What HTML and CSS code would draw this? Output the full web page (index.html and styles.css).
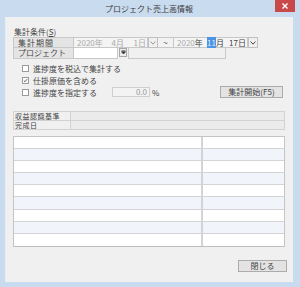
FILE: index.html
```html
<!DOCTYPE html>
<html lang="ja">
<head>
<meta charset="utf-8">
<link rel="stylesheet" href="styles.css">
</head>
<body>
<div class="window">
  <div class="titlebar">
    <span></span>
    <span class="title">プロジェクト売上高情報</span>
    <span class="close"><svg width="8" height="8" viewBox="0 0 8 8"><path d="M1.5 1.5 L6.5 6.5 M6.5 1.5 L1.5 6.5" stroke="#fff" stroke-width="1.4"/></svg></span>
  </div>
  <div class="client">
    <div class="group-title">集計条件(<u>S</u>)</div>
    <div class="row">
      <div class="lbl lbl-wide">集計期間</div>
      <div class="date disabled"><span class="y">2020年</span><span class="m">4月</span><span class="d">1日</span></div>
      <div class="ddbtn"><svg width="6" height="4" viewBox="0 0 6 4"><path d="M0.5 0.5 L3 3.2 L5.5 0.5" fill="none" stroke="#999" stroke-width="1"/></svg></div>
      <div class="tilde">~</div>
      <div class="date"><span class="y"><span class="gr">2020</span>年</span><span class="m"><span class="sel">11</span>月</span><span class="d">17日</span></div>
      <div class="ddbtn"><svg width="6" height="4" viewBox="0 0 6 4"><path d="M0.5 0.5 L3 3.2 L5.5 0.5" fill="none" stroke="#444" stroke-width="1"/></svg></div>
    </div>
    <div class="row">
      <div class="lbl">プロジェクト</div>
      <div class="proj-code"></div>
      <div class="pbtn"><svg width="5" height="5" viewBox="0 0 5 5"><path d="M0.5 0.8 H4.5 M0.5 1.8 L2.5 4 L4.5 1.8 Z" fill="#333" stroke="#333" stroke-width="0.7"/></svg></div>
      <div class="proj-name"></div>
    </div>
    <div class="checks">
      <label class="chk"><span class="box"></span>進捗度を税込で集計する</label>
      <label class="chk"><span class="box"><svg width="7" height="7" viewBox="0 0 7 7"><path d="M1.2 3.6 L2.8 5.2 L5.8 1.6" fill="none" stroke="#333" stroke-width="1.1"/></svg></span>仕掛原価を含める</label>
      <div class="chk-row">
        <label class="chk"><span class="box"></span>進捗度を指定する</label>
        <div class="num">0.0</div>
        <span class="pct">%</span>
        <div class="spacer"></div>
        <div class="btn btn-run">集計開始(F5)</div>
      </div>
    </div>
    <div class="info">
      <div class="ilbl">収益認識基準</div><div class="ival"></div>
      <div class="ilbl">完成日</div><div class="ival"></div>
    </div>
    <div class="list">
      <div class="lr"><div class="c1"></div><div class="c2"></div></div>
      <div class="lr alt"><div class="c1"></div><div class="c2"></div></div>
      <div class="lr"><div class="c1"></div><div class="c2"></div></div>
      <div class="lr alt"><div class="c1"></div><div class="c2"></div></div>
      <div class="lr"><div class="c1"></div><div class="c2"></div></div>
      <div class="lr alt"><div class="c1"></div><div class="c2"></div></div>
      <div class="lr"><div class="c1"></div><div class="c2"></div></div>
      <div class="lr alt"><div class="c1"></div><div class="c2"></div></div>
      <div class="lr last"><div class="c1"></div><div class="c2"></div></div>
    </div>
    <div class="footer">
      <div class="btn btn-close">閉じる</div>
    </div>
  </div>
</div>
</body>
</html>
```
FILE: styles.css
```css
* { box-sizing: border-box; }
html, body { margin: 0; padding: 0; }
body {
  width: 300px;
  height: 287px;
  overflow: hidden;
  background: #c9dbef;
  font-family: "Noto Sans CJK JP", "Noto Sans", sans-serif;
  font-size: 8px;
  color: #444;
}
.window {
  width: 300px;
  height: 287px;
  display: flex;
  flex-direction: column;
  padding: 0 7px 5px 5px;
  background: #c9dbef;
}
.titlebar {
  height: 17px;
  display: grid;
  grid-template-columns: 1fr auto 1fr;
  align-items: start;
  margin: 0 -3px 0 -5px;
}
.title {
  font-size: 8px;
  line-height: 17px;
  color: #3a3a3a;
  padding-left: 2px;
}
.close {
  justify-self: end;
  width: 20px;
  height: 12px;
  margin-right: 1px;
  background: #c9484a;
  display: flex;
  align-items: center;
  justify-content: center;
}
.client {
  flex: 1;
  background: #f0f0f0;
  border-left: 1px solid #e6eef8;
  display: flex;
  flex-direction: column;
  padding: 0 0 0 7px;
}
.group-title {
  margin-top: 10px;
  height: 10px;
  line-height: 10px;
  padding-left: 1px;
}
.group-title u { text-decoration: underline; }
.row {
  display: flex;
  height: 11px;
}
.lbl {
  width: 61px;
  border: 1px solid #c8c8c8;
  background: #e4e4e4;
  line-height: 9px;
  padding-left: 4px;
}
.row + .row .lbl { border-top: none; }
.lbl-wide { letter-spacing: 1px; }
.date {
  width: 74px;
  border: 1px solid #c8c8c8;
  border-left: none;
  background: #f4f4f4;
  display: flex;
  line-height: 9px;
  padding-left: 3px;
  white-space: nowrap;
}
.date.disabled { color: #aaa; }
.date .y { width: 30px; }
.date .m { width: 17px; text-align: right; }
.date .d { width: 22px; text-align: right; }
.gr { color: #aaa; }
.sel { background: #4b95e6; color: #dbe9fa; }
.ddbtn {
  width: 10px;
  border: 1px solid #c0c0c0;
  background: #f0f0f0;
  display: flex;
  align-items: center;
  justify-content: center;
}
.tilde {
  width: 16px;
  border: 1px solid #c8c8c8;
  border-left: none;
  text-align: center;
  line-height: 9px;
  background: #f2f2f2;
}
.proj-code {
  width: 44px;
  border: 1px solid #c8c8c8;
  border-left: none;
  border-top: none;
  background: #fff;
}
.pbtn {
  width: 8px;
  height: 9px;
  margin: 0 1px;
  border: 1px solid #a8a8a8;
  background: #ececec;
  display: flex;
  align-items: center;
  justify-content: center;
}
.proj-name {
  width: 98px;
  border: 1px solid #c8c8c8;
  border-top: none;
  background: #f0f0f0;
}
.checks {
  margin-top: 4px;
  padding-left: 9px;
  display: flex;
  flex-direction: column;
}
.chk {
  display: flex;
  align-items: center;
  height: 11.5px;
  white-space: nowrap;
}
.box {
  width: 7px;
  height: 7px;
  border: 1px solid #9a9a9a;
  background: #fff;
  margin-right: 4px;
  display: flex;
  align-items: center;
  justify-content: center;
}
.box svg { display: block; }
.chk-row {
  display: flex;
  align-items: center;
  height: 12px;
}
.num {
  width: 38px;
  height: 10px;
  margin-left: 15px;
  border: 1px solid #cfcfcf;
  background: #f3f3f3;
  color: #999;
  text-align: right;
  line-height: 8px;
  padding-right: 2px;
}
.pct { margin-left: 2px; }
.spacer { flex: 1; }
.btn {
  border: 1px solid #acacac;
  background: #e3e3e3;
  text-align: center;
  line-height: 10px;
}
.btn-run {
  width: 63px;
  height: 12px;
  margin-right: 10px;
}
.info {
  margin-top: 13px;
  width: 272px;
  display: grid;
  grid-template-columns: 57px 1fr;
  grid-auto-rows: 9px;
  border-top: 1px solid #d2d2d2;
  border-left: 1px solid #d2d2d2;
}
.ilbl, .ival {
  border-right: 1px solid #d2d2d2;
  border-bottom: 1px solid #d2d2d2;
}
.ilbl {
  line-height: 8px;
  padding-left: 1px;
  font-size: 7px;
  letter-spacing: 0.5px;
}
.ival { background: #ebebeb; }
.list {
  margin-top: 6px;
  width: 272px;
  border: 1px solid #c4c4c4;
  border-bottom: 1px solid #bdbdbd;
  background: #fff;
  display: flex;
  flex-direction: column;
}
.lr {
  display: flex;
  height: 12.1px;
  border-bottom: 1px solid #d4d4d4;
}
.lr.last { border-bottom: none; }
.lr.alt { background: #f1f5fb; }
.c1 { width: 189px; border-right: 2px solid #d4d4d4; }
.c2 { flex: 1; }
.footer {
  margin-top: 13px;
  display: flex;
  justify-content: flex-end;
  padding-right: 6px;
}
.btn-close {
  width: 49px;
  height: 12px;
}
```
